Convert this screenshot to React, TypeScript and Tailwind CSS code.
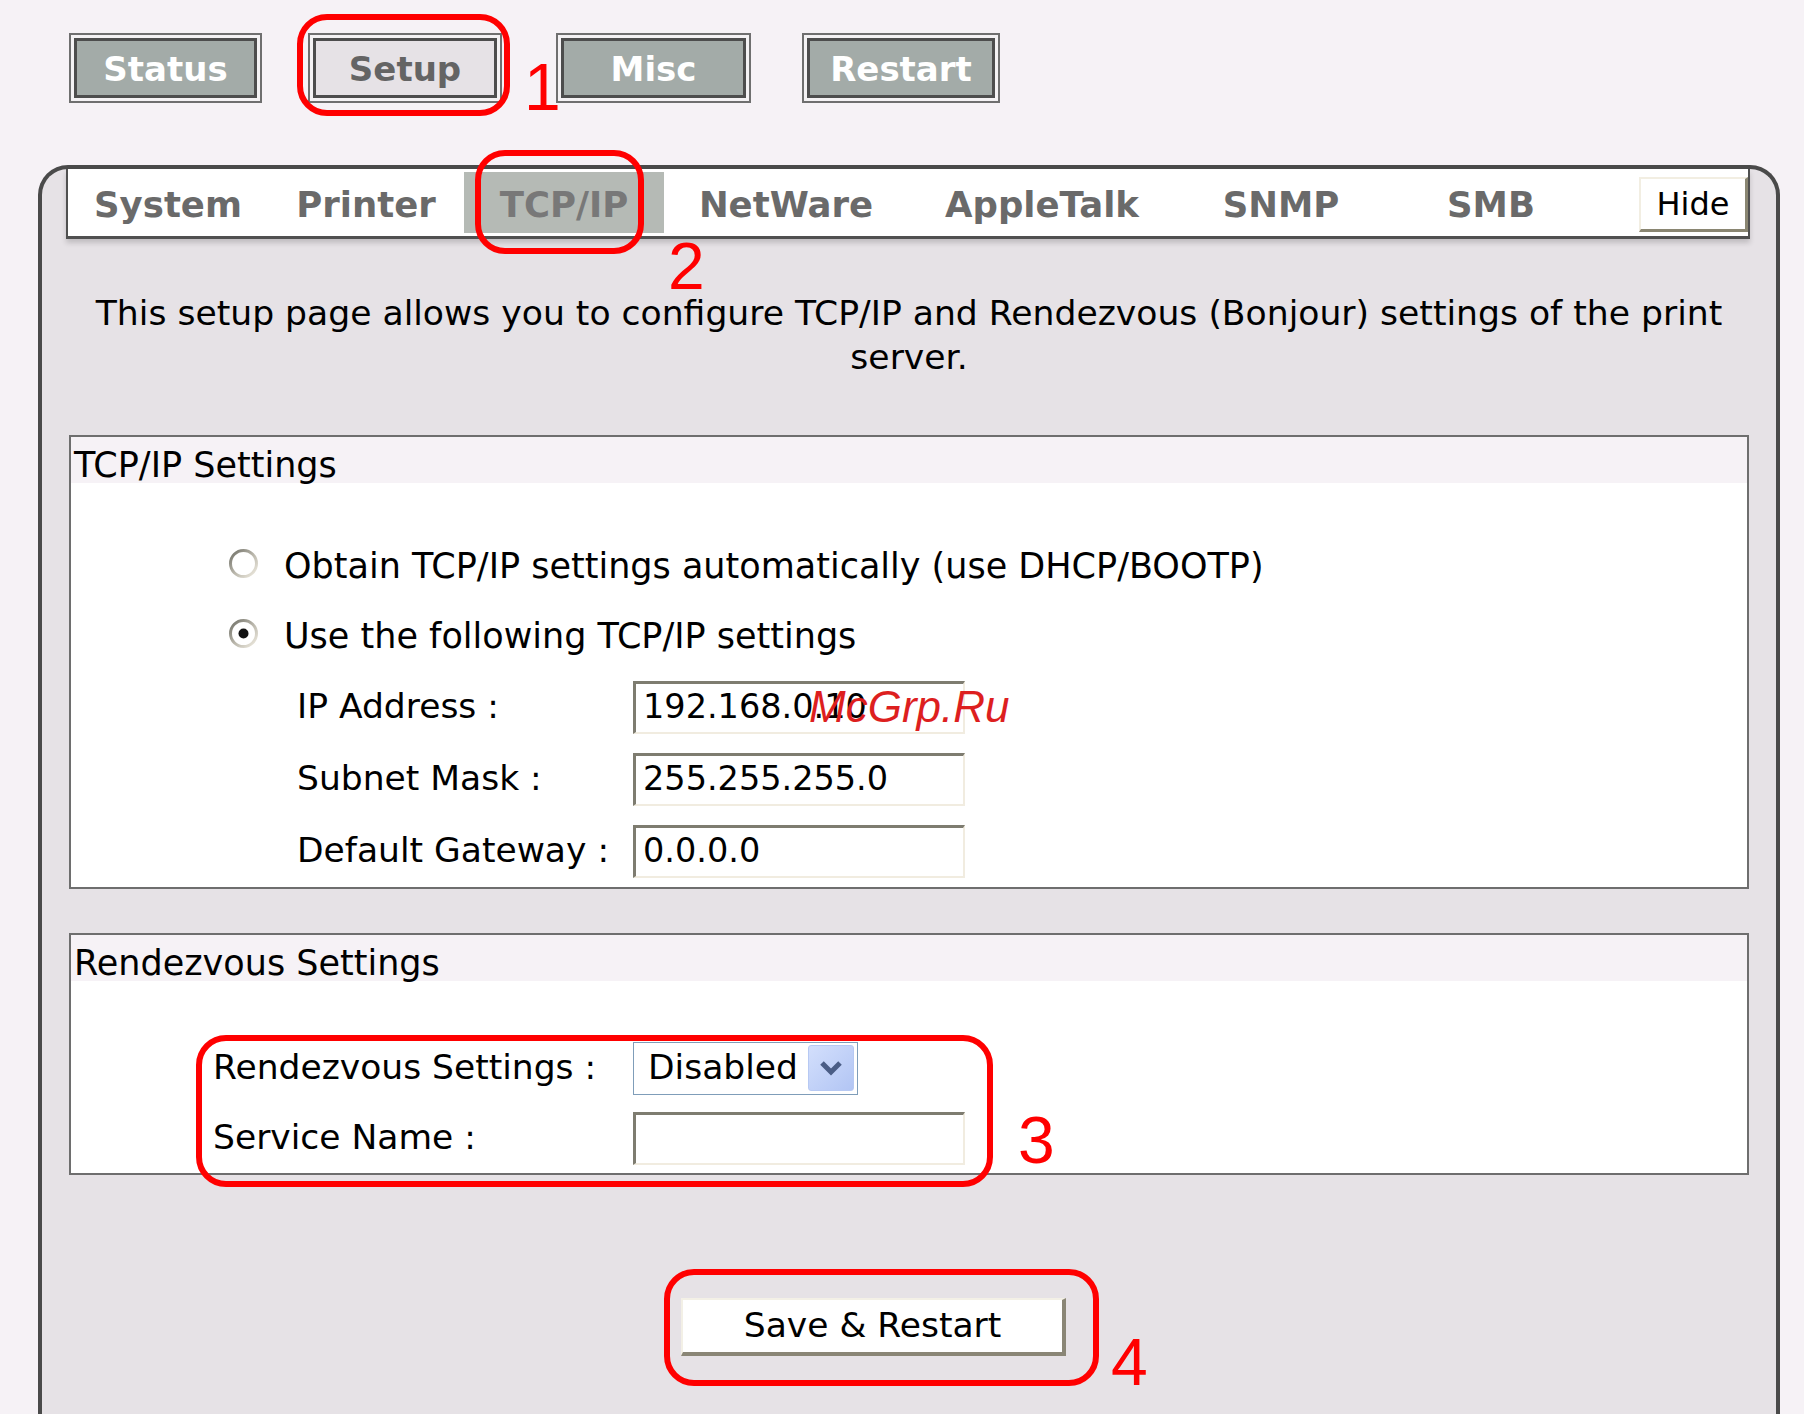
const FONT = "font-['DejaVu_Sans',Verdana,sans-serif]";

const tabs = [
  { label: "System", w: "w-[200px]" },
  { label: "Printer", w: "w-[196px]" },
  { label: "TCP/IP", w: "w-[200px]", active: true },
  { label: "NetWare", w: "w-[244px]" },
  { label: "AppleTalk", w: "w-[268px]" },
  { label: "SNMP", w: "w-[210px]" },
  { label: "SMB", w: "w-[210px]" },
];

function NavButton({ label, active, className }: { label: string; active?: boolean; className?: string }) {
  return (
    <div className={`flex h-[70px] border-2 border-[#6f6f6f] bg-[#f4f2f4] p-[3px] ${className ?? ""}`}>
      <div
        className={`flex flex-1 items-center justify-center border-[3px] border-[#4d4d4d] pt-[3px] text-[34px] font-bold ${
          active ? "bg-[#e6e2e6] text-[#646464]" : "bg-[#a3aba8] text-white"
        }`}
      >
        {label}
      </div>
    </div>
  );
}

function Radio({ id, checked }: { id: string; checked?: boolean }) {
  return (
    <svg width="31" height="31" viewBox="0 0 31 31" className="-mt-[6px]">
      <defs>
        <linearGradient id={id} x1="0" y1="0" x2="1" y2="1">
          <stop offset="0" stopColor="#6f6f66" />
          <stop offset="0.5" stopColor="#b8b5aa" />
          <stop offset="1" stopColor="#f1ede2" />
        </linearGradient>
      </defs>
      <circle cx="15.5" cy="15.5" r="13" fill="#fff" stroke={`url(#${id})`} strokeWidth="3" />
      {checked ? <circle cx="15.5" cy="15.5" r="5" fill="#111" /> : null}
    </svg>
  );
}

function TextInput({ value }: { value?: string }) {
  return (
    <div className="flex h-[53px] w-[332px] items-center border-t-[3px] border-r-2 border-b-2 border-l-[3px] border-t-[#7e7c70] border-r-[#f1ece0] border-b-[#f1ece0] border-l-[#7e7c70] bg-white pl-[7px] text-[33.5px] text-black">
      {value}
    </div>
  );
}

function Box({ title, children, className }: { title: string; children: React.ReactNode; className?: string }) {
  return (
    <div className={`ml-[27px] w-[1680px] border-2 border-[#6e6e6e] bg-white ${className ?? ""}`}>
      <div className="h-[46px] bg-[#f6f2f6] pt-[5px] pl-[3px] text-[35px] leading-[46px] text-black">{title}</div>
      {children}
    </div>
  );
}

function FieldRow({ label, labelClass, children }: { label: string; labelClass: string; children: React.ReactNode }) {
  return (
    <div className="flex h-[72px] items-center">
      <div className={`text-[34.5px] text-black ${labelClass}`}>{label}</div>
      {children}
    </div>
  );
}

function Ring({ className }: { className: string }) {
  return <div className={`pointer-events-none absolute rounded-[30px] border-[6px] border-[#ff0000] ${className}`} />;
}

function Mark({ n, className }: { n: string; className: string }) {
  return (
    <div className={`absolute font-['Liberation_Sans',Arial,sans-serif] text-[66px] leading-none text-[#ff0000] ${className}`}>
      {n}
    </div>
  );
}

export default function App() {
  return (
    <div className={`relative h-[1414px] w-[1804px] overflow-hidden bg-[#f6f2f6] ${FONT}`}>
      {/* top navigation */}
      <div className="flex pt-[33px] pl-[69px]">
        <NavButton label="Status" className="w-[193px]" />
        <NavButton label="Setup" active className="ml-[46px] w-[194px]" />
        <NavButton label="Misc" className="ml-[54px] w-[195px]" />
        <NavButton label="Restart" className="ml-[51px] w-[198px]" />
      </div>

      {/* settings panel */}
      <div className="mt-[62px] ml-[38px] h-[1300px] w-[1742px] rounded-t-[30px] border-x-4 border-t-4 border-[#4a4a4a] bg-[#e6e2e6]">
        <div className="ml-[24px] flex h-[70px] w-[1684px] border-x-2 border-b-[3px] border-[#505050] bg-white shadow-[0_4px_5px_rgba(0,0,0,0.16)]">
          {tabs.map((t) => (
            <div
              key={t.label}
              className={`flex items-center justify-center pt-[5px] text-[35.5px] font-bold ${t.w} ${
                t.active ? "my-[3px] bg-[#b5bab5] text-[#787878]" : "text-[#6a6a6a]"
              }`}
            >
              {t.label}
            </div>
          ))}
          <div className="mt-[8px] mb-[4px] ml-auto flex w-[109px] items-center justify-center border-t-2 border-r-[3px] border-b-[3px] border-l-2 border-t-[#f2eee2] border-r-[#8a8672] border-b-[#8a8672] border-l-[#f2eee2] bg-white text-[32px] text-black">
            Hide
          </div>
        </div>

        <p className="mx-auto mt-[52px] w-[1660px] text-center text-[34.6px] leading-[44px] text-black">
          This setup page allows you to configure TCP/IP and Rendezvous (Bonjour) settings of the print server.
        </p>

        <Box title="TCP/IP Settings" className="mt-[56px]">
          <div className="pt-[48px]">
            <div className="flex h-[70px] items-center pl-[157px]">
              <Radio id="r1" />
              <span className="ml-[25px] text-[35px] text-black">Obtain TCP/IP settings automatically (use DHCP/BOOTP)</span>
            </div>
            <div className="flex h-[70px] items-center pl-[157px]">
              <Radio id="r2" checked />
              <span className="ml-[25px] text-[35px] text-black">Use the following TCP/IP settings</span>
            </div>
            <FieldRow label="IP Address :" labelClass="ml-[226px] w-[336px]">
              <div className="relative">
                <TextInput value="192.168.0.10" />
                <span className="absolute top-[4px] left-[176px] font-['Liberation_Sans',Arial,sans-serif] text-[44px] leading-none text-[#dd1f1f] italic">
                  McGrp.Ru
                </span>
              </div>
            </FieldRow>
            <FieldRow label="Subnet Mask :" labelClass="ml-[226px] w-[336px]">
              <TextInput value="255.255.255.0" />
            </FieldRow>
            <FieldRow label="Default Gateway :" labelClass="ml-[226px] w-[336px]">
              <TextInput value="0.0.0.0" />
            </FieldRow>
          </div>
        </Box>

        <Box title="Rendezvous Settings" className="mt-[44px]">
          <div className="pt-[52px]">
            <div className="flex h-[70px] items-center">
              <div className="ml-[142px] w-[420px] text-[34.5px] text-black">Rendezvous Settings :</div>
              <div className="flex h-[53px] w-[225px] items-center border border-[#7f9db9] bg-white pr-[3px] pl-[14px] text-[34.5px] text-black">
                <span className="flex-1">Disabled</span>
                <div className="flex h-[46px] w-[46px] items-center justify-center rounded-[3px] border border-[#b7c9f3] bg-gradient-to-br from-[#d3dffc] to-[#b2c5f4]">
                  <svg width="24" height="18" viewBox="0 0 24 18">
                    <path d="M3 4 L12 13 L21 4" fill="none" stroke="#4a5d86" strokeWidth="5" />
                  </svg>
                </div>
              </div>
            </div>
            <div className="flex h-[70px] items-center">
              <div className="ml-[142px] w-[420px] text-[34.5px] text-black">Service Name :</div>
              <TextInput />
            </div>
          </div>
        </Box>

        <div className="mt-[123px] ml-[639px] flex h-[58px] w-[385px] items-center justify-center border-t-2 border-r-4 border-b-4 border-l-2 border-t-[#f3f0e6] border-r-[#8a8676] border-b-[#8a8676] border-l-[#f3f0e6] bg-white text-[34.5px] text-black">
          Save &amp; Restart
        </div>
      </div>

      {/* annotations */}
      <Ring className="top-[14px] left-[297px] h-[102px] w-[213px]" />
      <Mark n="1" className="top-[54px] left-[524px]" />
      <Ring className="top-[150px] left-[475px] h-[104px] w-[169px]" />
      <Mark n="2" className="top-[233px] left-[668px]" />
      <Ring className="top-[1035px] left-[196px] h-[152px] w-[797px]" />
      <Mark n="3" className="top-[1107px] left-[1018px]" />
      <Ring className="top-[1269px] left-[664px] h-[117px] w-[435px]" />
      <Mark n="4" className="top-[1329px] left-[1111px]" />
    </div>
  );
}
